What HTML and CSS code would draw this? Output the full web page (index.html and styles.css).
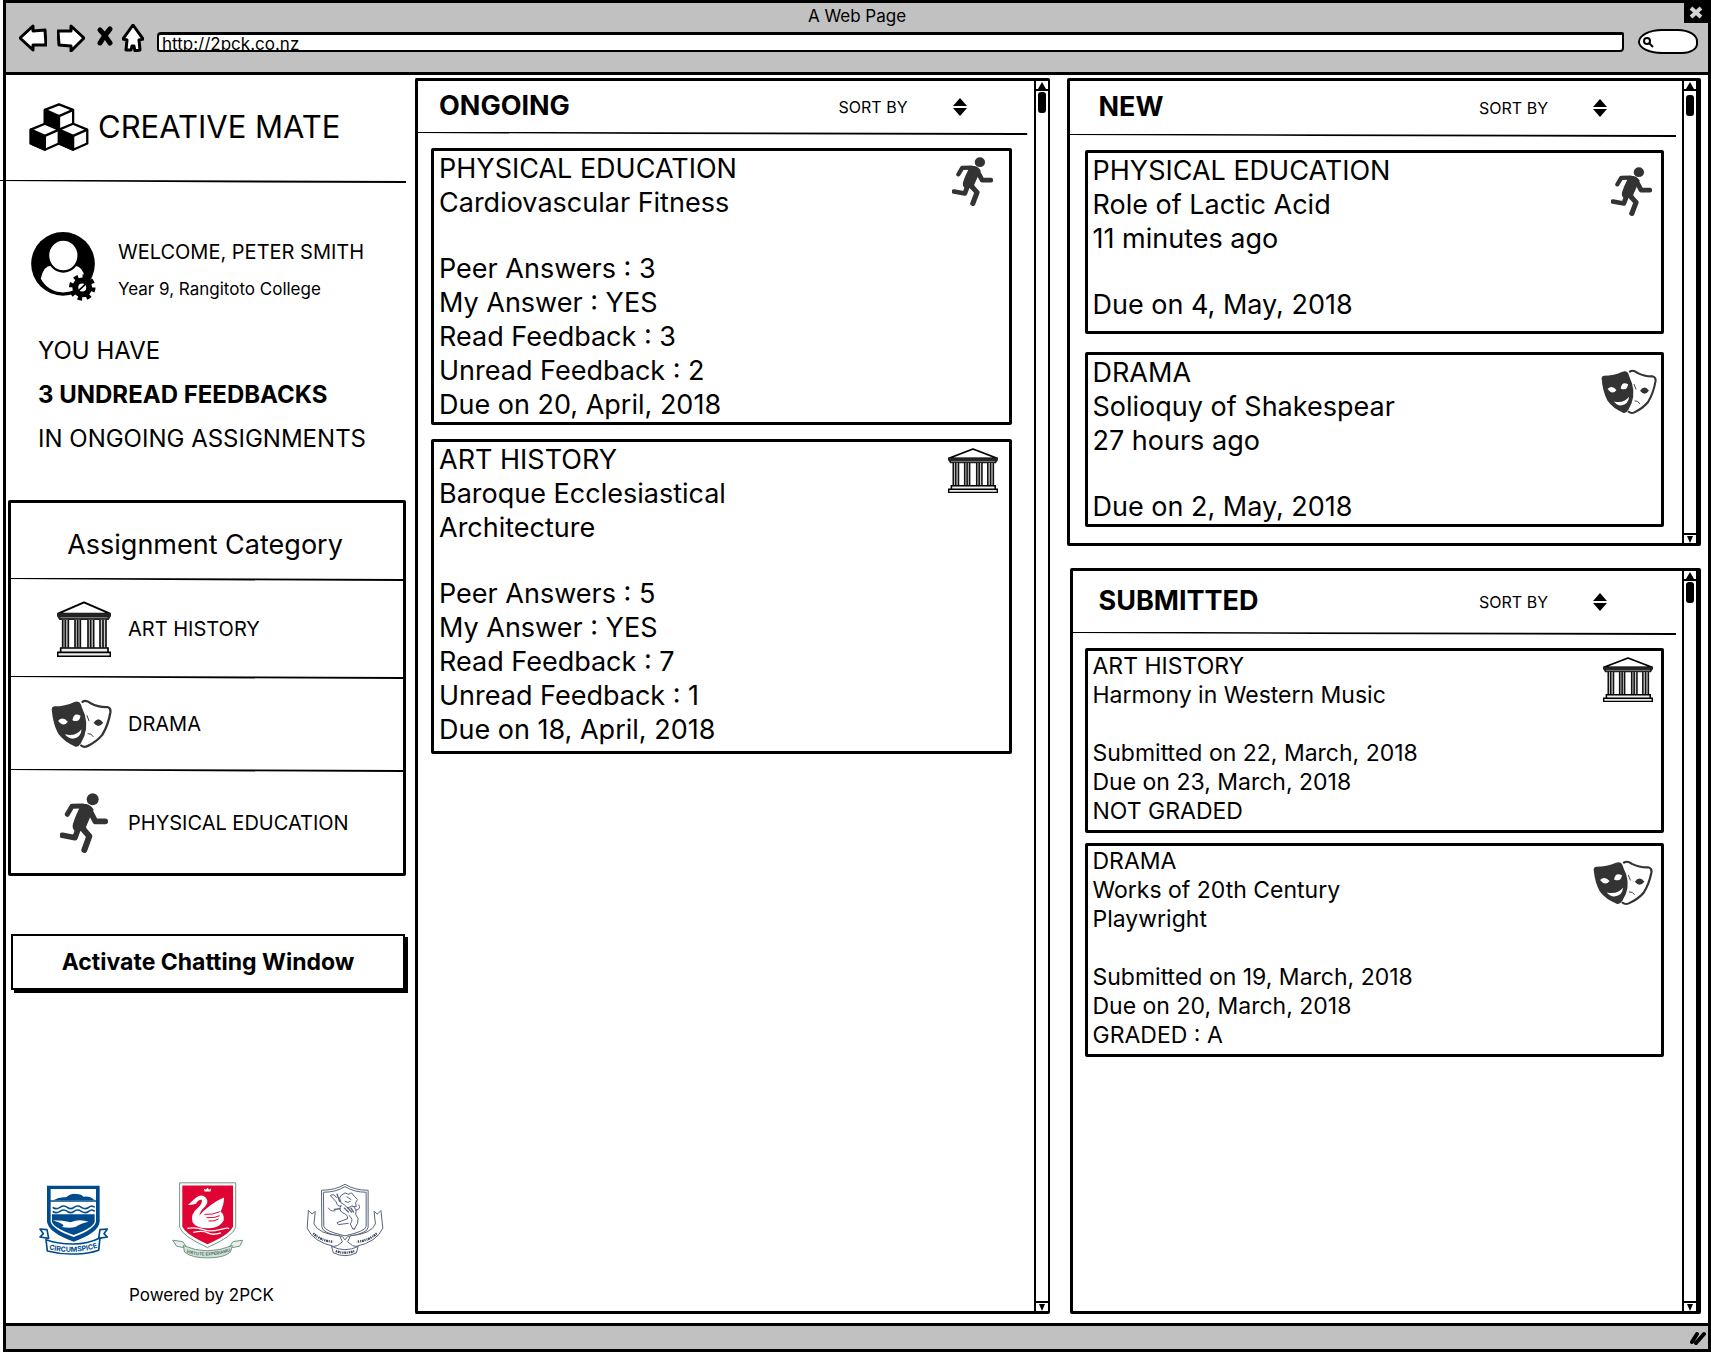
FILE: index.html
```html
<!DOCTYPE html>
<html lang="en">
<head>
<meta charset="utf-8">
<title>Creative Mate</title>
<meta name="viewport" content="width=device-width, initial-scale=1">
<link rel="stylesheet" href="styles.css">
</head>
<body>
<svg class="sprite" aria-hidden="true">
  <symbol id="runner" viewBox="183 670 144 180" preserveAspectRatio="none">
    <g fill="none" stroke="#333" stroke-linecap="round" stroke-linejoin="round">
      <path d="M205 734 219 710 252 709" stroke-width="15"/>
      <path d="M272 722 289 755 319 755" stroke-width="17"/>
      <path d="M238 776 228 804 190 797" stroke-width="17"/>
      <path d="M250 776 271 800 256 841" stroke-width="18"/>
    </g>
    <path fill="#333" d="M222 703H262Q276 706 284 720L272 746 261 772 264 784H228Q218 776 222 762L229 742 241 715Z"/>
    <circle cx="281" cy="689" r="18" fill="#333"/>
  </symbol>
  <symbol id="masks" viewBox="150 372 188 156" preserveAspectRatio="none">
    <path fill="#333" d="M152 404Q152 396 160 395 194 395 222 381 237 376 242 388 246 402 254 420 268 468 242 510 234 524 224 520 190 506 172 480 156 450 152 404Z"/>
    <path fill="#fff" d="M172 440Q186 424 202 443 188 462 172 440ZM216 438Q220 412 241 424 238 448 216 438ZM193 482Q226 490 244 466 243 492 217 496 201 494 193 482Z"/>
    <path fill="none" stroke="#333" stroke-width="7" stroke-linecap="round" stroke-linejoin="round" d="M247 381Q257 373 272 385 296 398 324 397 335 400 333 414 326 454 308 484 290 506 262 519 251 524 243 517"/>
    <path fill="#333" d="M281 446Q296 424 311 446 296 466 281 446Z"/>
    <path fill="none" stroke="#333" stroke-width="3" stroke-linecap="round" d="M261 424 267 440M264 480Q274 478 280 489"/>
  </symbol>
  <symbol id="temple" viewBox="171 80 162 168" preserveAspectRatio="none">
    <path fill="#fff" stroke="#000" stroke-width="6" stroke-linejoin="round" d="M174 118 252 84 330 118Z"/>
    <path fill="#222" d="M171 116H333V125L326 137H178L171 125Z"/>
    <path stroke="#bbb" stroke-width="2" d="M181 130H323"/>
    <path fill="#ccc" d="M188 136H205V219H188ZM225 136H241V219H225ZM264 136H281V219H264ZM300 136H318V219H300Z"/>
    <path stroke="#111" stroke-width="5" d="M188 136V220M196 136V220M205 136V220M225 136V220M233 136V220M241 136V220M264 136V220M272 136V220M281 136V220M300 136V220M309 136V220M318 136V220"/>
    <path fill="#eee" stroke="#000" stroke-width="5" d="M182 221H324V234H182ZM173 234H331V246H173Z"/>
  </symbol>
  <symbol id="rule" viewBox="0 0 600 3" preserveAspectRatio="none">
    <path fill="#000" d="M0 0 120 0 600 1V3L240 2 0 1Z"/>
  </symbol>
  <symbol id="sort" viewBox="0 0 14 18">
    <path d="M7 0 14 8H0ZM0 10H14L7 18Z"/>
  </symbol>
  <symbol id="up" viewBox="0 0 8 7"><path d="M4 0 8 7H0Z"/></symbol>
  <symbol id="down" viewBox="0 0 8 7"><path d="M1 0H7L4 7Z"/></symbol>
</svg>

<div class="window">
  <header class="chrome">
    <div class="titlebar">
      <span class="title">A Web Page</span>
      <button class="close" type="button" aria-label="Close">
        <svg viewBox="0 0 24 20" width="24" height="20" aria-hidden="true"><path d="M7 5 17 14M17 5 7 14" stroke="#d4d4d4" stroke-width="4"/></svg>
      </button>
    </div>
    <div class="toolbar">
      <nav class="nav" aria-label="Browser">
        <button type="button" aria-label="Back"><svg viewBox="0 0 28 28" width="28" height="28"><path class="ink" d="M14 2 1 14 14 26 14 21 27 21 26 6 14 7Z"/></svg></button>
        <button type="button" aria-label="Forward"><svg viewBox="0 0 28 28" width="28" height="28"><path class="ink" d="M14 2 27 14 14 27 14 22 2 21 1 7 14 7Z"/></svg></button>
        <button class="stop" type="button" aria-label="Stop"><svg viewBox="0 0 18 28" width="18" height="28"><path d="M4 6Q8 10 14 19M14 5Q8 12 4 19" fill="none" stroke="#000" stroke-width="5" stroke-linecap="round"/></svg></button>
        <button type="button" aria-label="Home"><svg viewBox="0 0 22 28" width="22" height="28"><path class="ink" d="M11 1 1 15 5 16 4 26 9 26 10 22 12 22 13 27 18 26 17 16 21 15Z"/></svg></button>
      </nav>
      <input class="url" type="text" aria-label="Address" value="http://2pck.co.nz">
      <label class="search">
        <svg viewBox="0 0 12 12" width="12" height="12" aria-hidden="true"><circle cx="5" cy="5" r="3" fill="none" stroke="#000" stroke-width="2"/><path d="M7 7 11 11" stroke="#000" stroke-width="2"/></svg>
        <input type="search" aria-label="Search">
      </label>
    </div>
  </header>

  <div class="content">
    <aside class="sidebar">
      <div class="brand">
        <svg viewBox="85 308 180 146" width="60" height="48" aria-hidden="true">
          <g fill="#fff" stroke="#000" stroke-width="7" stroke-linejoin="round">
            <path d="M175 312 218 329V372L175 392 132 372V329Z"/><path fill="#000" d="M132 329 175 348V392L132 372Z"/><path fill="none" d="M175 348 218 329"/>
            <path d="M132 371 175 389V431L132 450 89 431V389Z"/><path fill="#000" d="M89 389 132 408V450L89 431Z"/><path fill="none" d="M132 408 175 389"/>
            <path d="M218 371 261 389V431L218 450 175 431V389Z"/><path fill="#000" d="M175 389 218 408V450L175 431Z"/><path fill="none" d="M218 408 261 389"/>
          </g>
        </svg>
        <h1>CREATIVE MATE</h1>
      </div>
      <svg class="rule rule--brand" aria-hidden="true"><use href="#rule"/></svg>

      <div class="user">
        <svg viewBox="93 693 195 208" width="65" height="69" aria-hidden="true">
          <circle cx="189" cy="789" r="96"/>
          <path fill="#fff" d="M122 834Q130 794 155 795 190 826 225 795 248 796 256 834 236 874 189 875 145 874 122 834Z"/>
          <ellipse cx="190" cy="764" rx="46" ry="48" fill="#fff" stroke="#000" stroke-width="7"/>
          <circle cx="247" cy="860" r="33" fill="none" stroke="#000" stroke-width="14" stroke-dasharray="13 12.9"/>
          <circle cx="247" cy="860" r="21" fill="#fff" stroke="#000" stroke-width="18"/>
          <path d="M236 870 257 850" stroke="#000" stroke-width="5"/>
        </svg>
        <div class="user-text">
          <p class="user-name">WELCOME, PETER SMITH</p>
          <p class="user-school">Year 9, Rangitoto College</p>
        </div>
      </div>

      <div class="notice">
        <p>YOU HAVE</p>
        <p><strong>3 UNDREAD FEEDBACKS</strong></p>
        <p>IN ONGOING ASSIGNMENTS</p>
      </div>

      <section class="category">
        <h2>Assignment Category</h2>
        <svg class="rule" aria-hidden="true"><use href="#rule"/></svg>
        <a class="cat cat--art" href="#art"><svg class="cat-temple" aria-hidden="true"><use href="#temple"/></svg><span>ART HISTORY</span></a>
        <svg class="rule" aria-hidden="true"><use href="#rule"/></svg>
        <a class="cat cat--drama" href="#drama"><svg class="cat-masks" aria-hidden="true"><use href="#masks"/></svg><span>DRAMA</span></a>
        <svg class="rule" aria-hidden="true"><use href="#rule"/></svg>
        <a class="cat cat--pe" href="#pe"><svg class="cat-runner" aria-hidden="true"><use href="#runner"/></svg><span>PHYSICAL EDUCATION</span></a>
      </section>

      <button class="chat" type="button">Activate Chatting Window</button>

      <footer class="partners">
        <div class="crests">
          <svg viewBox="117 72 210 210" width="70" height="70" role="img" aria-label="Circumspice crest">
            <path fill="#004b8d" d="M141 74H299V182Q297 214 221 242 145 214 141 182Z"/>
            <path fill="#fff" d="M152 84H288V118H152ZM152 122H288V182Q284 204 221 228 156 204 152 182Z"/>
            <path fill="#004b8d" d="M160 118Q180 106 198 109 212 96 226 99 244 98 250 107 272 104 284 118ZM156 160H284V182Q280 200 221 222 160 200 156 182Z"/>
            <path fill="none" stroke="#004b8d" stroke-width="5" d="M158 139Q168 147 180 139T202 139 222 139 244 139 266 139 284 139M158 151Q168 159 180 151T202 151 222 151 244 151 266 151 284 151"/>
            <path fill="#fff" d="M158 178Q190 178 212 184 236 172 266 182 240 188 226 198 210 202 184 198 204 192 158 178Z"/>
            <path fill="#fff" stroke="#004b8d" stroke-width="5" stroke-linejoin="round" d="M141 206 120 204 130 218 120 228 146 232ZM300 206 322 204 312 218 322 228 296 232Z"/>
            <path fill="#fff" stroke="#004b8d" stroke-width="5" stroke-linejoin="round" d="M138 236Q180 250 221 249 262 249 300 231L296 268Q262 280 221 279 180 280 142 270Z"/>
            <path id="circum" fill="none" d="M147 265Q220 283 296 259"/>
            <text class="motto motto--blue"><textPath href="#circum">CIRCUMSPICE</textPath></text>
          </svg>
          <svg viewBox="506 66 214 234" width="71" height="78" role="img" aria-label="Swan crest">
            <path fill="#fff" stroke="#6f9483" stroke-width="3" d="M529 71H698V205Q690 232 613 266 538 232 529 205Z"/>
            <path fill="#df0433" d="M537 79H690V202Q682 226 613 256 546 226 537 202Z"/>
            <path fill="#fff" d="M604 97 602 88 608 92 613 86 618 92 624 88 622 97ZM554 138Q566 126 578 116 596 102 608 116 618 128 606 142 590 156 588 170 600 154 610 148 636 126 663 115 662 140 652 158 664 164 662 184 652 206 620 208 580 210 568 190 560 166 584 146 598 134 596 122 586 120 578 134 566 138 554 138Z"/>
            <path fill="none" stroke="#df0433" stroke-width="3" d="M604 166Q630 168 650 158M610 176Q634 178 650 170M616 186Q634 188 646 180"/>
            <path fill="none" stroke="#fff" stroke-width="4" d="M552 208Q580 204 600 212T650 212 676 210M570 220Q600 214 614 222T654 222"/>
            <path fill="#e6efe9" stroke="#6f9483" stroke-width="3" stroke-linejoin="round" d="M508 244 538 248 548 262 540 266 520 262ZM719 244 690 248 680 262 688 266 710 262Z"/>
            <path fill="#d5e2da" stroke="#6f9483" stroke-width="3" d="M540 260Q612 292 688 260L682 280Q660 298 613 297 568 298 544 280Z"/>
            <path id="virtute" fill="none" d="M548 281Q612 302 684 276"/>
            <text class="motto motto--green"><textPath href="#virtute">VIRTUTE EXPERIAMUR</textPath></text>
          </svg>
          <svg viewBox="918 62 236 224" width="78" height="74" role="img" aria-label="Lion crest">
            <g fill="none" stroke="#56627a" stroke-width="3" stroke-linejoin="round" stroke-linecap="round">
              <path d="M966 84Q1006 84 1036 66 1066 84 1106 84V196Q1106 214 1044 224L1036 234 1028 224Q966 214 966 196Z"/>
              <path d="M972 90Q1008 90 1036 73 1064 90 1100 90V194Q1098 208 1036 222 974 208 972 194Z"/>
              <path d="M986 138Q992 150 1006 146M992 100 1010 120Q1012 134 1024 132M992 100Q1004 92 1010 106M1026 98 1036 92 1046 96 1056 92 1064 102 1074 112 1068 122 1070 134 1056 132 1044 138 1034 128 1024 122 1020 108ZM1024 130Q1016 142 1028 152 1046 158 1044 170L1012 182 1016 188 1046 184M1060 132Q1074 142 1068 156 1080 170 1074 184L1064 202M1048 160Q1064 172 1052 186L1060 202 1066 200M1068 144Q1086 142 1078 128M1042 104 1054 112M1052 118Q1046 124 1036 118"/>
              <path d="M1034 138 1046 150M1044 136 1056 150M1054 138 1062 150M1012 96 1020 118M1004 142 1020 140" stroke-width="4"/>
              <path d="M926 146 936 156 946 148 942 186Q956 216 1020 222L1028 240Q1012 256 1002 254 940 240 922 200ZM1144 146 1134 156 1124 148 1128 186Q1116 216 1052 222L1044 240Q1060 256 1070 254 1132 240 1150 200Z" fill="#fff"/>
              <path d="M996 254Q1036 274 1076 254L1070 274Q1036 290 1002 274Z" fill="#fff"/>
            </g>
            <path fill="none" stroke="#3c475e" stroke-width="7" stroke-dasharray="4 2 6 2 3 3" d="M940 214Q960 236 1000 240M1132 214Q1110 236 1072 240M1008 268Q1036 278 1064 268"/>
          </svg>
        </div>
        <p class="powered">Powered by 2PCK</p>
      </footer>
    </aside>

    <main class="panel panel--ongoing">
      <div class="panel-body">
        <div class="panel-head">
          <h2>ONGOING</h2>
          <button class="sort" type="button"><span>SORT BY</span><svg width="14" height="18" aria-hidden="true"><use href="#sort"/></svg></button>
        </div>
        <svg class="rule" aria-hidden="true"><use href="#rule"/></svg>
        <div class="cards">
          <article class="card card--tight">
            <div class="card-text">
              <h3>PHYSICAL EDUCATION</h3>
              <p class="topic">Cardiovascular Fitness</p>
              <p>Peer Answers : 3</p>
              <p>My Answer : YES</p>
              <p>Read Feedback : 3</p>
              <p>Unread Feedback : 2</p>
              <p>Due on 20, April, 2018</p>
            </div>
            <svg class="icon icon--runner" aria-hidden="true"><use href="#runner"/></svg>
          </article>
          <article class="card">
            <div class="card-text">
              <h3>ART HISTORY</h3>
              <p class="topic">Baroque Ecclesiastical<br>Architecture</p>
              <p>Peer Answers : 5</p>
              <p>My Answer : YES</p>
              <p>Read Feedback : 7</p>
              <p>Unread Feedback : 1</p>
              <p>Due on 18, April, 2018</p>
            </div>
            <svg class="icon icon--temple" aria-hidden="true"><use href="#temple"/></svg>
          </article>
        </div>
      </div>
      <div class="scrollbar">
        <button type="button" aria-label="Scroll up"><svg width="8" height="7" aria-hidden="true"><use href="#up"/></svg></button>
        <div class="track"><div class="thumb"></div></div>
        <button class="end" type="button" aria-label="Scroll down"><svg width="8" height="7" aria-hidden="true"><use href="#down"/></svg></button>
      </div>
    </main>

    <div class="column">
      <section class="panel panel--new">
        <div class="panel-body">
          <div class="panel-head">
            <h2>NEW</h2>
            <button class="sort" type="button"><span>SORT BY</span><svg width="14" height="18" aria-hidden="true"><use href="#sort"/></svg></button>
          </div>
          <svg class="rule" aria-hidden="true"><use href="#rule"/></svg>
          <div class="cards">
            <article class="card card--roomy">
              <div class="card-text">
                <h3>PHYSICAL EDUCATION</h3>
                <p>Role of Lactic Acid</p>
                <p class="topic">11 minutes ago</p>
                <p>Due on 4, May, 2018</p>
              </div>
              <svg class="icon icon--runner icon--low" aria-hidden="true"><use href="#runner"/></svg>
            </article>
            <article class="card card--tight">
              <div class="card-text">
                <h3>DRAMA</h3>
                <p>Solioquy of Shakespear</p>
                <p class="topic">27 hours ago</p>
                <p>Due on 2, May, 2018</p>
              </div>
              <svg class="icon icon--masks icon--low" aria-hidden="true"><use href="#masks"/></svg>
            </article>
          </div>
        </div>
        <div class="scrollbar">
          <button type="button" aria-label="Scroll up"><svg width="8" height="7" aria-hidden="true"><use href="#up"/></svg></button>
          <div class="track track--scrolled"><div class="thumb"></div></div>
          <button class="end" type="button" aria-label="Scroll down"><svg width="8" height="7" aria-hidden="true"><use href="#down"/></svg></button>
        </div>
      </section>

      <section class="panel panel--submitted">
        <div class="panel-body">
          <div class="panel-head">
            <h2>SUBMITTED</h2>
            <button class="sort" type="button"><span>SORT BY</span><svg width="14" height="18" aria-hidden="true"><use href="#sort"/></svg></button>
          </div>
          <svg class="rule" aria-hidden="true"><use href="#rule"/></svg>
          <div class="cards">
            <article class="card">
              <div class="card-text">
                <h3>ART HISTORY</h3>
                <p class="topic">Harmony in Western Music</p>
                <p>Submitted on 22, March, 2018</p>
                <p>Due on 23, March, 2018</p>
                <p>NOT GRADED</p>
              </div>
              <svg class="icon icon--temple" aria-hidden="true"><use href="#temple"/></svg>
            </article>
            <article class="card">
              <div class="card-text">
                <h3>DRAMA</h3>
                <p class="topic">Works of 20th Century<br>Playwright</p>
                <p>Submitted on 19, March, 2018</p>
                <p>Due on 20, March, 2018</p>
                <p>GRADED : A</p>
              </div>
              <svg class="icon icon--masks icon--low" aria-hidden="true"><use href="#masks"/></svg>
            </article>
          </div>
        </div>
        <div class="scrollbar">
          <button type="button" aria-label="Scroll up"><svg width="8" height="7" aria-hidden="true"><use href="#up"/></svg></button>
          <div class="track"><div class="thumb"></div></div>
          <button class="end" type="button" aria-label="Scroll down"><svg width="8" height="7" aria-hidden="true"><use href="#down"/></svg></button>
        </div>
      </section>
    </div>
  </div>

  <div class="statusbar">
    <svg viewBox="0 0 16 14" width="16" height="14" aria-hidden="true"><path d="M2 11 7 3M6 12 14 3" stroke="#000" stroke-width="4" stroke-linecap="round"/></svg>
  </div>
</div>
</body>
</html>
```

FILE: styles.css
```css
* {
  box-sizing: border-box;
}

body {
  margin: 0;
  background: #fff;
  color: #000;
  font: 27px/34px Inter, "Liberation Sans", sans-serif;
}

h1, h2, h3, p {
  margin: 0;
  font-size: inherit;
  font-weight: 400;
}

button, input {
  margin: 0;
  padding: 0;
  border: 0;
  background: none;
  color: inherit;
  font: inherit;
}

svg {
  display: block;
}

.sprite {
  position: absolute;
  width: 0;
  height: 0;
}

/* Browser frame */

.window {
  display: flex;
  flex-direction: column;
  min-height: 100vh;
  margin-left: 3px;
  border: 3px solid #000;
}

.chrome {
  padding-bottom: 20px;
  border-bottom: 3px solid #000;
  background: #c1c1c1;
}

.titlebar {
  display: grid;
  grid-template-columns: 1fr auto 1fr;
  height: 20px;
  font-size: 17px;
  line-height: 26px;
}

.title {
  grid-column: 2;
}

.close {
  justify-self: end;
  width: 24px;
  height: 20px;
  background: #000;
}

.toolbar {
  display: flex;
  align-items: flex-end;
  height: 29px;
  padding: 0 10px 0 13px;
}

.nav {
  display: flex;
  gap: 10px;
  margin-right: 13px;
}

.nav .stop {
  margin: 0 -2px 0 1px;
}

.ink {
  fill: #fff;
  stroke: #000;
  stroke-width: 3;
  stroke-linejoin: round;
}

.url {
  flex: 1;
  min-width: 0;
  height: 20px;
  padding: 3px 3px 0;
  border: 2px solid #000;
  border-top-width: 3px;
  border-radius: 4px 2px 4px 3px;
  background: #fff;
  font-size: 17px;
}

.search {
  display: flex;
  align-items: center;
  width: 60px;
  height: 25px;
  margin: 0 0 -2px 14px;
  padding-left: 2px;
  border: 2px solid #000;
  border-radius: 24px 20px 16px 24px / 13px 12px 10px 12px;
  background: #fff;
}

.search input {
  width: 36px;
  height: 16px;
  font-size: 12px;
}

.statusbar {
  display: flex;
  align-items: center;
  justify-content: flex-end;
  height: 26px;
  padding-right: 2px;
  border-top: 3px solid #000;
  background: #c1c1c1;
}

/* Page grid */

.content {
  display: grid;
  flex: 1;
  grid-template-columns: 392px minmax(0, 1fr) minmax(0, 1fr);
  column-gap: 17px;
  padding: 3px 7px 9px 0;
}

.rule {
  width: 100%;
  height: 3px;
}

/* Sidebar */

.sidebar {
  display: flex;
  flex-direction: column;
}

.brand {
  display: flex;
  align-items: center;
  gap: 9px;
  height: 102px;
  padding-bottom: 4px;
  padding-left: 23px;
}

.brand h1 {
  font-size: 31px;
}

.rule--brand {
  width: 406px;
  margin-left: -6px;
}

.user {
  display: flex;
  gap: 22px;
  margin-top: 49px;
  padding-left: 25px;
  line-height: 37px;
}

.user-text {
  padding-top: 2px;
}

.user-name {
  font-size: 20px;
}

.user-school {
  font-size: 17px;
}

.notice {
  margin-top: 21px;
  padding-left: 32px;
  font-size: 24px;
  line-height: 44px;
}

.category {
  margin: 39px -8px 0 2px;
  border: 3px solid #000;
  border-radius: 2px;
}

.category h2 {
  padding: 8px 4px 0 0;
  line-height: 67px;
  text-align: center;
}

.cat {
  display: grid;
  grid-template-columns: 78px 1fr;
  gap: 5px;
  align-items: center;
  justify-items: start;
  padding-left: 34px;
  color: inherit;
  font-size: 20px;
  text-decoration: none;
}

.cat svg {
  justify-self: center;
}

.cat--art {
  height: 95px;
}

.cat--drama {
  height: 90px;
}

.cat--pe {
  height: 101px;
}

.cat-temple {
  width: 54px;
  height: 56px;
}

.cat-masks {
  width: 61px;
  height: 50px;
  margin-right: 5px;
}

.cat-runner {
  width: 48px;
  height: 60px;
}

.chat {
  height: 56px;
  margin: 58px -7px 0 5px;
  border: 2px solid #000;
  box-shadow: 3px 3px 0 #000;
  font-size: 23px;
  font-weight: 700;
}

.partners {
  margin-top: auto;
  padding: 40px 14px 7px 33px;
}

.crests {
  display: flex;
  align-items: center;
  justify-content: space-between;
}

.motto {
  font-family: Inter, "Liberation Sans", sans-serif;
  font-weight: 700;
}

.motto--blue {
  fill: #004b8d;
  font-size: 21px;
}

.motto--green {
  fill: #4f7463;
  font-size: 13px;
}

.powered {
  margin: 24px 20px 0 0;
  font-size: 17px;
  line-height: 24px;
  text-align: center;
}

/* Panels */

.column {
  display: flex;
  flex-direction: column;
  gap: 22px;
}

.panel {
  display: flex;
  border: 3px solid #000;
  border-radius: 2px;
}

.panel-body {
  flex: 1;
  min-width: 0;
}

.panel-body > .rule {
  width: calc(100% - 6px);
}

.panel-head {
  display: flex;
  align-items: center;
  justify-content: space-between;
}

.panel-head h2 {
  padding-bottom: 2px;
  font-weight: 700;
}

.sort {
  display: flex;
  align-items: center;
  gap: 45px;
  font-size: 16px;
  line-height: 20px;
}

.cards {
  display: flex;
  flex-direction: column;
}

.panel--ongoing {
  border-right: 0;
}

.panel--ongoing .panel-head {
  height: 51px;
  padding: 0 67px 0 21px;
}

.panel--ongoing .cards {
  gap: 14px;
  padding: 13px 22px 13px 13px;
}

.panel--ongoing .card {
  padding-right: 11px;
}

.panel--new .panel-head {
  height: 53px;
  padding: 0 75px 0 29px;
}

.panel--new .cards {
  gap: 18px;
  padding: 13px 18px 16px 15px;
}

.panel--new .card {
  padding-right: 4px;
}

.panel--submitted {
  flex: 1;
  margin-left: 3px;
}

.panel--submitted .panel-head {
  height: 61px;
  padding: 0 75px 0 26px;
}

.panel--submitted .cards {
  gap: 10px;
  padding: 13px 18px 13px 12px;
  font-size: 23px;
  line-height: 29px;
}

.card {
  display: flex;
  align-items: flex-start;
  justify-content: space-between;
  padding: 1px 8px 4px 5px;
  border: 3px solid #000;
  border-radius: 2px;
}

.card--tight {
  padding-bottom: 0;
}

.card--roomy {
  padding-bottom: 9px;
}

.card .topic {
  margin-bottom: 32px;
}

.panel--submitted .topic {
  margin-bottom: 29px;
}

.icon {
  flex: none;
  margin-top: 5px;
}

.icon--low {
  margin-top: 13px;
}

.icon--runner {
  width: 41px;
  height: 49px;
  margin-right: 5px;
}

.icon--temple {
  width: 50px;
  height: 45px;
}

.icon--masks {
  width: 56px;
  height: 46px;
}

.panel--submitted .icon--masks {
  width: 60px;
}

/* Scrollbars */

.scrollbar {
  display: flex;
  flex: none;
  flex-direction: column;
  width: 16px;
  border: solid #000;
  border-width: 0 2px;
}

.scrollbar button {
  display: grid;
  height: 10px;
  border-bottom: 2px solid #000;
  place-items: center;
}

.scrollbar .end {
  border-top: 2px solid #000;
  border-bottom: 0;
}

.track {
  flex: 1;
  padding: 1px 2px;
}

.track--scrolled {
  padding-top: 4px;
}

.thumb {
  height: 21px;
  border-radius: 3px;
  background: #000;
}
```
